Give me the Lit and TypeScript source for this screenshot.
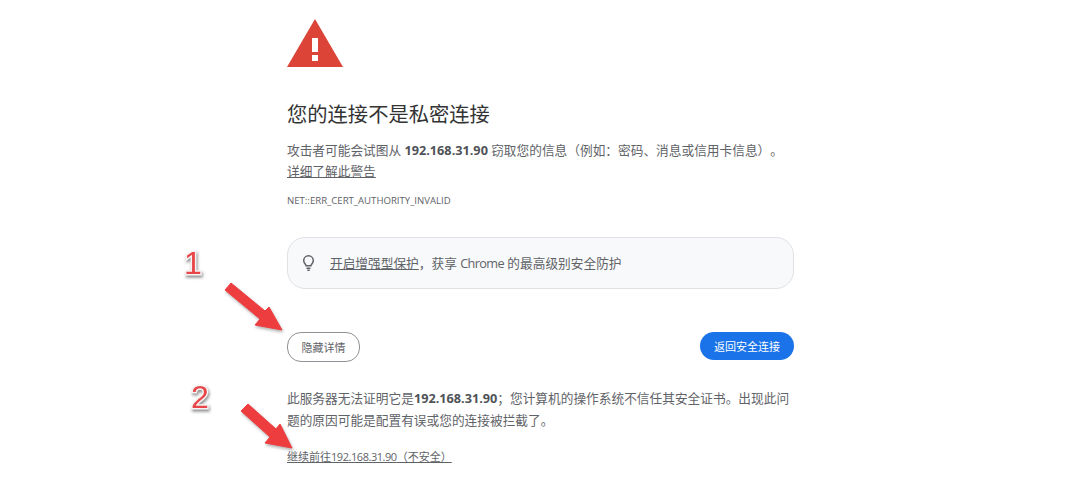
import { LitElement, css, html } from 'lit'
import { customElement } from 'lit/decorators.js'

@customElement('app-root')
export class AppRoot extends LitElement {
  static styles = css`
    :host {
      display: block;
      position: relative;
      height: 489px;
      overflow: hidden;
      background: #fff;
      color: #5f6368;
      font-family: 'Open Sans', 'Noto Sans CJK SC', sans-serif;
      font-size: 12.7px;
      text-spacing-trim: space-all;
    }
    .page {
      width: 507px;
      margin-left: 287px;
      padding-top: 19px;
      display: flex;
      flex-direction: column;
    }
    .warn {
      display: block;
      width: 56px;
      height: 48px;
    }
    h1 {
      margin: 33px 0 0;
      font-size: 20.3px;
      line-height: 28px;
      font-weight: 400;
      color: #333;
    }
    .intro {
      margin: 12px 0 0;
      line-height: 21px;
    }
    b {
      color: #4f5357;
      font-weight: 700;
    }
    a {
      color: inherit;
      text-decoration: underline;
    }
    .code {
      margin-top: 13px;
      font-size: 9.6px;
      line-height: 12px;
    }
    .promo {
      margin-top: 30px;
      height: 49px;
      padding-bottom: 1px;
      border: 1px solid #dfe1e5;
      border-radius: 18px;
      background: #f8f9fa;
      display: flex;
      align-items: center;
      gap: 15px;
      padding-left: 14px;
    }
    .bulb {
      width: 13px;
      height: 16px;
      flex: none;
    }
    .actions {
      margin-top: 43px;
      display: flex;
      justify-content: space-between;
      align-items: flex-start;
    }
    .btn {
      height: 28px;
      border-radius: 14px;
      display: flex;
      align-items: center;
      justify-content: center;
      font-size: 11px;
    }
    .ghost {
      width: 71px;
      border: 1px solid #8e9195;
    }
    .primary {
      width: 94px;
      background: #1a73e8;
      color: #fff;
    }
    .details {
      margin: 25px 0 0;
      line-height: 22px;
    }
    .proceed {
      margin-top: 19px;
      font-size: 11px;
      line-height: 14px;
    }
    .ip {
      letter-spacing: -0.45px;
    }
    .word {
      letter-spacing: -0.6px;
    }
    .mark {
      position: absolute;
      font-family: 'Liberation Sans', sans-serif;
      font-size: 32px;
      line-height: 32px;
      color: #e8474a;
      -webkit-text-stroke: 3px #f7f3f3;
      paint-order: stroke fill;
      filter: drop-shadow(1px 2px 1.5px rgba(0, 0, 0, 0.45));
    }
    .arrow {
      position: absolute;
      width: 70px;
      height: 60px;
      filter: drop-shadow(1px 2px 1.5px rgba(0, 0, 0, 0.3));
    }
  `

  render() {
    return html`
      <div class="page">
        <svg class="warn" viewBox="0 0 56 48">
          <path d="M28 0 L56 48 H0 Z" fill="#db4437" />
          <rect x="25" y="19" width="6" height="14" fill="#fff" />
          <rect x="25" y="36" width="6" height="6" fill="#fff" />
        </svg>
        <h1>您的连接不是私密连接</h1>
        <p class="intro">
          攻击者可能会试图从 <b>192.168.31.90</b> 窃取您的信息（例如：密码、消息或信用卡信息）。<br />
          <a>详细了解此警告</a>
        </p>
        <div class="code">NET::ERR_CERT_AUTHORITY_INVALID</div>
        <div class="promo">
          <svg class="bulb" viewBox="0 0 16 20" fill="none" stroke="#5f6368" stroke-width="1.9">
            <path d="M5 13.5 C5 11.5 2 10.5 2 7 A6 6 0 0 1 14 7 C14 10.5 11 11.5 11 13.5 Z" />
            <path d="M5.5 16.5 H10.5 M6.5 19 H9.5" />
          </svg>
          <span><a>开启增强型保护</a>，获享 <span class="word">Chrome</span> 的最高级别安全防护</span>
        </div>
        <div class="actions">
          <div class="btn ghost">隐藏详情</div>
          <div class="btn primary">返回安全连接</div>
        </div>
        <p class="details">
          此服务器无法证明它是<b>192.168.31.90</b>；您计算机的操作系统不信任其安全证书。出现此问题的原因可能是配置有误或您的连接被拦截了。
        </p>
        <div class="proceed"><a>继续前往<span class="ip">192.168.31.90</span>（不安全）</a></div>
      </div>

      <div class="mark" style="left:184px;top:247px">1</div>
      <div class="mark" style="left:191px;top:381px">2</div>
      <svg class="arrow" style="left:222px;top:280px" viewBox="0 0 70 60">
        <path d="M9 3 L43 31 L47 27 L60 50 L33 45 L38 39 L3 10 Z" fill="#ee3d3f" stroke="#ee3d3f" stroke-linejoin="round" />
      </svg>
      <svg class="arrow" style="left:238px;top:402px" viewBox="0 0 70 60">
        <path d="M10 2 L38 27 L42 22 L54 46 L27 41 L32 35 L3 9 Z" fill="#ee3d3f" stroke="#ee3d3f" stroke-linejoin="round" />
      </svg>
    `
  }
}
